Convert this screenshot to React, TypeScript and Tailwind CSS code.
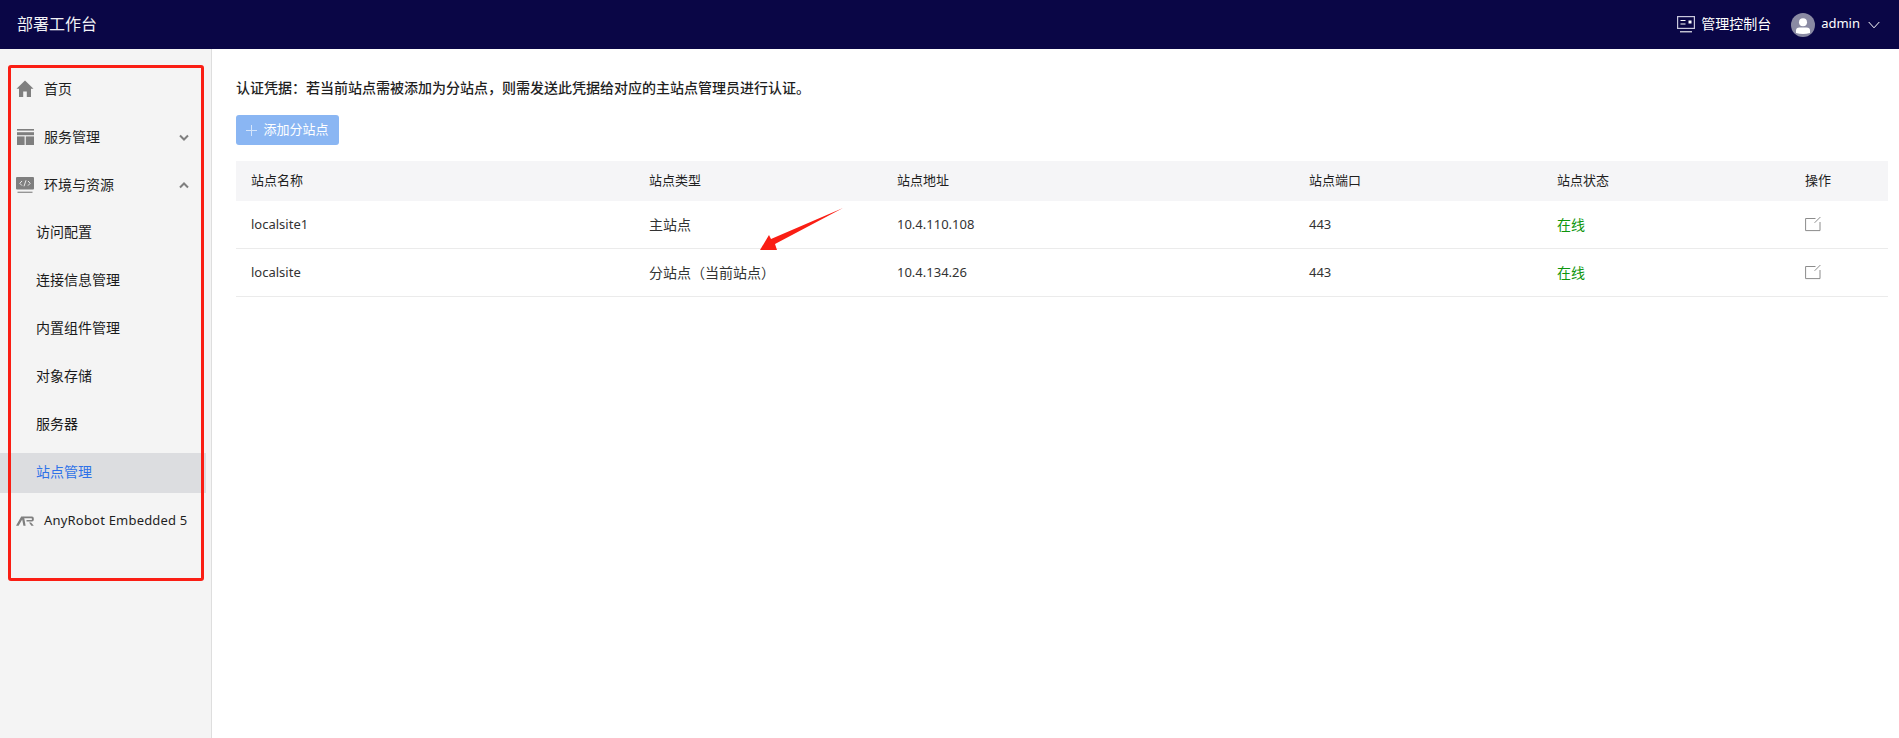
import React from "react";

const cols = "grid grid-cols-[398px_248px_412px_248px_248px_98px]";

function Home() {
  return (
    <svg width="18" height="18" viewBox="0 0 18 18" fill="#7f7f7f">
      <path d="M9 0.5 L17.5 8.8 L15 8.8 L15 17 L10.8 17 L10.8 11.5 L7.2 11.5 L7.2 17 L3 17 L3 8.8 L0.5 8.8 Z" />
    </svg>
  );
}
function Layout() {
  return (
    <svg width="17" height="16" viewBox="0 0 17 16" fill="#7f7f7f">
      <rect x="0" y="0" width="17" height="1.6" />
      <rect x="0" y="3.2" width="17" height="3" />
      <rect x="0" y="7.4" width="7.6" height="8.6" />
      <rect x="8.8" y="7.4" width="8.2" height="8.6" />
    </svg>
  );
}
function Code() {
  return (
    <svg width="18" height="16" viewBox="0 0 18 16">
      <rect x="0" y="0" width="18" height="12.5" rx="1" fill="#7f7f7f" />
      <path d="M6 4 L3.8 6.3 L6 8.6 M12 4 L14.2 6.3 L12 8.6 M10 3.3 L8 9.3" stroke="#f4f4f4" strokeWidth="0.9" fill="none" />
      <rect x="1.5" y="14.7" width="15" height="1.1" fill="#7f7f7f" />
    </svg>
  );
}
function ARLogo() {
  return (
    <svg width="18" height="10" viewBox="0 0 18 10" fill="none">
      <path d="M0 9.8 L5.2 0.6 L8 0.6 L9.6 9.8 L7.4 9.8 L6.2 3.4 L2.6 9.8 Z" fill="#7f7f7f" />
      <path d="M7.8 0.6 L16 0.6 Q17.8 0.6 17.8 2.4 L17.8 3.8 Q17.8 5.6 16 5.6 L10.5 5.6 L10.5 4 L15.4 4 Q15.9 4 15.9 3.4 L15.9 2.8 Q15.9 2.2 15.4 2.2 L8.2 2.2 Z" fill="#7f7f7f" />
      <path d="M13 6.6 L15 6.6 L17.8 9.8 L15.4 9.8 Z" fill="#7f7f7f" />
    </svg>
  );
}
function Chevron({ up }: { up?: boolean }) {
  return (
    <svg width="10" height="7" viewBox="0 0 10 7" fill="none">
      <path d={up ? "M1 5.5 L5 1.5 L9 5.5" : "M1 1.5 L5 5.5 L9 1.5"} stroke="#7f7f7f" strokeWidth="2" />
    </svg>
  );
}
function Edit() {
  return (
    <svg width="16" height="15" viewBox="0 0 16 15" fill="none">
      <path d="M10.5 1.5 L0.6 1.5 L0.6 13.6 L15 13.6 L15 5" stroke="#8c8c8c" strokeWidth="1" />
      <path d="M15.4 0 L9.6 5.8" stroke="#8c8c8c" strokeWidth="1" />
    </svg>
  );
}
function Console() {
  return (
    <svg width="18" height="17" viewBox="0 0 18 17" fill="none">
      <rect x="0.6" y="0.6" width="16.8" height="11.8" stroke="#c9c8dc" strokeWidth="1.2" />
      <path d="M3.5 4.5 H8.5 M3.5 8 H8.5" stroke="#ffffff" strokeWidth="1" />
      <rect x="11.5" y="4.5" width="3" height="3" fill="#ffffff" />
      <path d="M3 15.8 H15" stroke="#ffffff" strokeWidth="1.1" />
    </svg>
  );
}
function Avatar() {
  return (
    <span className="w-6 h-6 rounded-full bg-[#8a8aa3] overflow-hidden flex items-center justify-center">
      <svg width="24" height="24" viewBox="0 0 24 24" fill="#ffffff">
        <circle cx="12" cy="9.2" r="4" />
        <path d="M5 20 V17.5 Q5 14.5 8.5 14.5 H15.5 Q19 14.5 19 17.5 V20 Q12 22 5 20 Z" />
      </svg>
    </span>
  );
}

function TopItem({ icon, label, chevron, small }: { icon: React.ReactNode; label: string; chevron?: "up" | "down"; small?: boolean }) {
  return (
    <div className="h-10 mb-2 flex items-center pl-4 pr-[22px] text-[#1f1f1f]">
      <span className="w-[18px] flex justify-center">{icon}</span>
      <span className={small ? "ml-[10px] flex-1 whitespace-nowrap text-[13px] tracking-[0.2px]" : "ml-[10px] flex-1 whitespace-nowrap pb-[1px] text-sm"}>{label}</span>
      {chevron && <Chevron up={chevron === "up"} />}
    </div>
  );
}
function SubItem({ label, active }: { label: string; active?: boolean }) {
  return (
    <div className={active ? "h-10 mb-2 flex items-center pl-9 pb-[2px] text-sm text-[#2f72e8] bg-[#dcdde0] w-[206px]" : "h-10 mb-2 flex items-center pl-9 pb-[2px] text-sm text-[#1a1a1a]"}>
      {label}
    </div>
  );
}

const headers = ["站点名称", "站点类型", "站点地址", "站点端口", "站点状态", "操作"];
const rows = [
  ["localsite1", "主站点", "10.4.110.108", "443"],
  ["localsite", "分站点\uFF08当前站点\uFF09", "10.4.134.26", "443"],
];

export default function App() {
  return (
    <div className="min-h-[738px] flex flex-col font-['Noto_Sans','Noto_Sans_CJK_SC',sans-serif] relative bg-white">
      <header className="h-[49px] bg-[#0a0646] flex items-center text-white">
        <div className="pl-[17px] pb-[2px] text-base flex-1 text-[#f2f2f6]">部署工作台</div>
        <div className="flex items-center text-sm">
          <Console />
          <span className="ml-[6px] pb-[2px]">管理控制台</span>
          <span className="ml-5"><Avatar /></span>
          <span className="ml-[6px] text-[13px] pb-[2px]">admin</span>
          <svg className="ml-2 mr-[19px]" width="12" height="8" viewBox="0 0 12 8" fill="none">
            <path d="M0.7 1 L6 6.8 L11.3 1" stroke="#ffffff" strokeWidth="1" />
          </svg>
        </div>
      </header>
      <div className="flex flex-1">
        <aside className="w-[212px] bg-[#f4f4f4] border-r border-[#dedede] pt-5 shrink-0">
          <TopItem icon={<Home />} label="首页" />
          <TopItem icon={<Layout />} label="服务管理" chevron="down" />
          <TopItem icon={<Code />} label="环境与资源" chevron="up" />
          <SubItem label="访问配置" />
          <SubItem label="连接信息管理" />
          <SubItem label="内置组件管理" />
          <SubItem label="对象存储" />
          <SubItem label="服务器" />
          <SubItem label="站点管理" active />
          <TopItem icon={<ARLogo />} label="AnyRobot Embedded 5" small />
        </aside>
        <main className="flex-1 pl-6 pr-[11px] pt-[29px]">
          <div className="text-sm font-medium text-[#1f1f1f] h-5 leading-5">
            认证凭据{"\uFF1A"}若当前站点需被添加为分站点{"\uFF0C"}则需发送此凭据给对应的主站点管理员进行认证{"\u3002"}
          </div>
          <button className="mt-[17px] w-[103px] h-[30px] rounded-[3px] bg-[#8ab6f3] text-white text-[13px] flex items-center justify-center gap-[6px]">
            <svg width="11" height="11" viewBox="0 0 11 11" fill="none">
              <path d="M5.5 0 V11 M0 5.5 H11" stroke="#d5e5fb" strokeWidth="1" />
            </svg>
            <span>添加分站点</span>
          </button>
          <div className="mt-4 text-[13px] text-[#333333]">
            <div className={`${cols} h-10 items-center bg-[#f5f5f7] text-[#1f1f1f]`}>
              {headers.map((h) => (
                <div key={h} className="pl-[15px]">{h}</div>
              ))}
            </div>
            {rows.map((r) => (
              <div key={r[0]} className={`${cols} h-12 items-center border-b border-[#ebebeb]`}>
                {r.map((c, i) => (
                  <div key={i} className={i === 1 ? "pl-[15px] text-sm" : "pl-[15px]"}>{c}</div>
                ))}
                <div className="pl-[15px] text-sm text-[#0e960e]">在线</div>
                <div className="pl-[15px] flex"><Edit /></div>
              </div>
            ))}
          </div>
        </main>
      </div>
      <div className="absolute left-2 top-[65px] w-[196px] h-[516px] border-[3px] border-[#fa1e14] rounded-[3px] pointer-events-none" />
      <svg className="absolute left-[755px] top-[204px] pointer-events-none" width="92" height="50" viewBox="755 204 92 50">
        <path d="M843 208 L775 244 L777 250 L760 250 L769 235 L771 239 Z" fill="#fa1e14" />
      </svg>
    </div>
  );
}
